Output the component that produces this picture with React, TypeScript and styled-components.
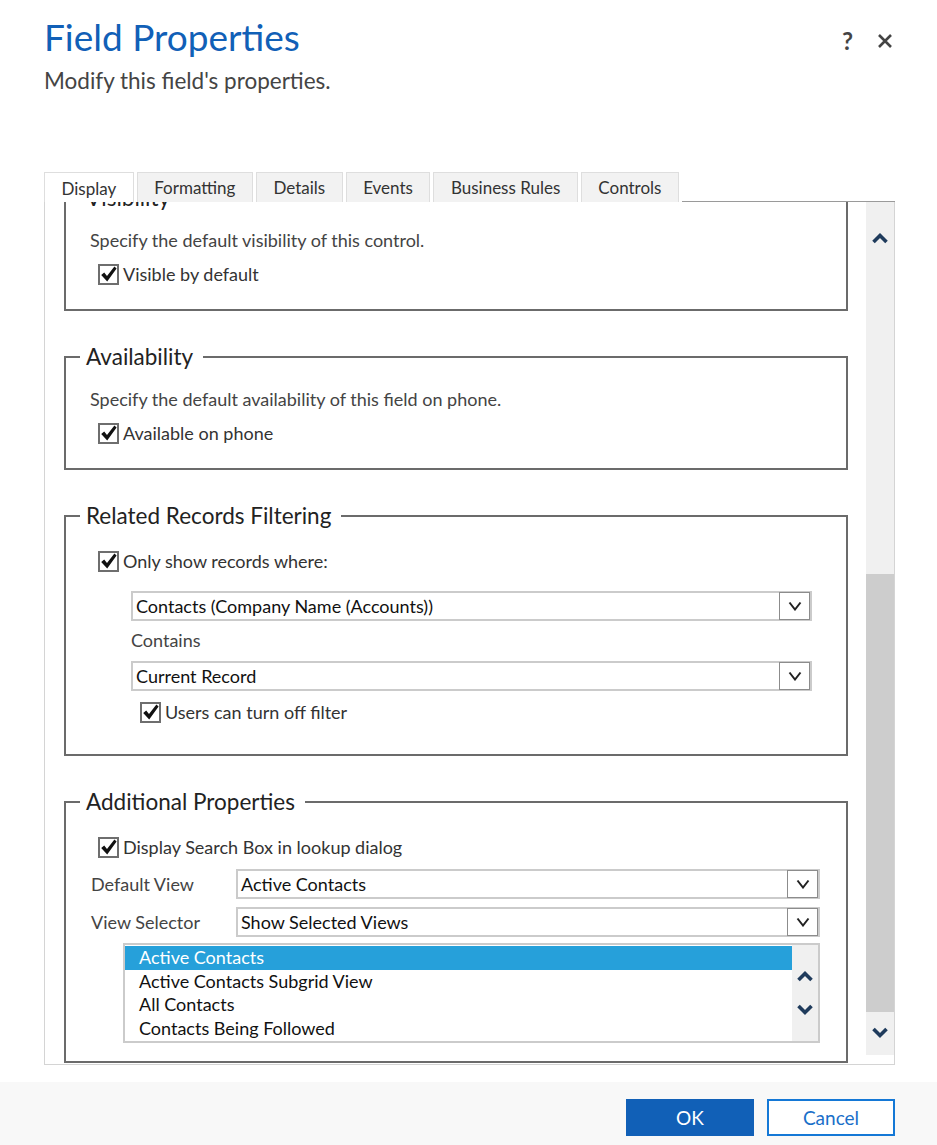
import React from 'react'
import styled, { createGlobalStyle } from 'styled-components'

const GlobalStyle = createGlobalStyle`
  html, body {
    margin: 0;
    padding: 0;
    background: #fff;
  }
  body {
    font-family: Lato, "Open Sans", sans-serif;
    color: #333;
  }
  * {
    box-sizing: border-box;
  }
`

const Page = styled.div`
  width: 937px;
  height: 1145px;
  display: flex;
  flex-direction: column;
  overflow: hidden;
`

const Header = styled.div`
  height: 172px;
  display: flex;
  justify-content: space-between;
  align-items: flex-start;
  padding: 15px 44px 0 44px;
`

const Title = styled.h1`
  margin: 0;
  font-size: 37px;
  line-height: 44px;
  font-weight: 400;
  color: #1160b7;
`

const Subtitle = styled.div`
  margin-top: 8px;
  font-size: 22.5px;
  line-height: 28px;
  color: #444;
`

const HeaderTools = styled.div`
  display: flex;
  align-items: center;
  gap: 24px;
  margin-top: 13px;
`

const HelpMark = styled.span`
  font-size: 24px;
  font-weight: 700;
  color: #444;
  line-height: 26px;
`

const Body = styled.div`
  padding: 0 42px 0 44px;
  display: flex;
  flex-direction: column;
`

const TabRow = styled.div`
  display: flex;
  align-items: flex-end;
  height: 30px;
  gap: 3px;
`

const Tab = styled.div<{ $active?: boolean }>`
  height: ${({ $active }) => ($active ? '31px' : '30px')};
  margin-bottom: ${({ $active }) => ($active ? '-1px' : '0')};
  padding: 0 16.5px;
  display: flex;
  align-items: center;
  font-size: 17px;
  color: #333;
  background: ${({ $active }) => ($active ? '#fff' : '#f2f2f2')};
  border: 1px solid #dedede;
  border-bottom: none;
`

const TabFiller = styled.div`
  flex: 1;
  align-self: stretch;
  border-bottom: 1px solid #9a9a9a;
`

const Frame = styled.div`
  height: 863px;
  display: flex;
  border: 1px solid #d4d4d4;
  border-top: none;
`

const Viewport = styled.div`
  flex: 1;
  overflow: hidden;
  display: flex;
  flex-direction: column;
  justify-content: flex-end;
  gap: 32px;
  padding: 0 18px 1px 19px;
`

const Group = styled.fieldset<{ $pb: number }>`
  margin: 0;
  min-width: 0;
  padding: 0 0 ${({ $pb }) => $pb}px 0;
  border: 2px solid #6b6b6b;
  display: flex;
  flex-direction: column;
  flex-shrink: 0;
`

const Legend = styled.legend`
  margin-left: 14px;
  padding: 0 10px 0 6px;
  font-size: 22.5px;
  line-height: 28px;
  color: #222;
`

const Description = styled.div<{ $mt: number }>`
  margin-top: ${({ $mt }) => $mt}px;
  padding-left: 24px;
  font-size: 18px;
  line-height: 22px;
  color: #444;
`

const CheckRow = styled.label<{ $indent: number; $mt: number }>`
  display: flex;
  align-items: center;
  gap: 4px;
  height: 24px;
  margin-top: ${({ $mt }) => $mt}px;
  margin-left: ${({ $indent }) => $indent}px;
  font-size: 18px;
  color: #333;
`

const SubLabel = styled.div`
  margin: 8px 0 0 65px;
  font-size: 18px;
  line-height: 22px;
  color: #444;
`

const SelectBox = styled.div<{ $mt?: number; $ml?: number; $mr?: number }>`
  height: 30px;
  margin-top: ${({ $mt }) => $mt ?? 0}px;
  margin-left: ${({ $ml }) => $ml ?? 0}px;
  margin-right: ${({ $mr }) => $mr ?? 0}px;
  display: flex;
  align-items: center;
  border: 2px solid #cbcbcb;
  background: #fff;
`

const SelectValue = styled.div`
  flex: 1;
  padding-left: 3px;
  font-size: 18px;
  color: #111;
  white-space: nowrap;
`

const SelectButton = styled.div`
  width: 31px;
  height: 28px;
  display: flex;
  align-items: center;
  justify-content: center;
  border: 1px solid #8c8c8c;
  background: #fff;
`

const FormRow = styled.div<{ $mt: number }>`
  display: grid;
  grid-template-columns: 145px 1fr;
  align-items: center;
  margin: ${({ $mt }) => $mt}px 26px 0 25px;
`

const FormLabel = styled.div`
  font-size: 18px;
  color: #444;
`

const ListBox = styled.div`
  height: 100px;
  margin: 6px 26px 0 57px;
  border: 2px solid #cbcbcb;
  display: flex;
`

const ListItems = styled.div`
  flex: 1;
  padding-top: 1px;
`

const ListItem = styled.div<{ $selected?: boolean }>`
  height: 23.5px;
  line-height: 23.5px;
  padding-left: 14px;
  font-size: 18px;
  color: ${({ $selected }) => ($selected ? '#fff' : '#111')};
  background: ${({ $selected }) => ($selected ? '#26a0da' : 'transparent')};
`

const ListScroll = styled.div`
  width: 26px;
  background: #f0f0f0;
  display: flex;
  flex-direction: column;
  align-items: center;
  justify-content: center;
  gap: 22px;
`

const Scrollbar = styled.div`
  width: 28px;
  margin-bottom: 9px;
  background: #f0f0f0;
  display: flex;
  flex-direction: column;
`

const ArrowCell = styled.div<{ $h: number; $align: string }>`
  height: ${({ $h }) => $h}px;
  display: flex;
  justify-content: center;
  align-items: ${({ $align }) => $align};
`

const Track = styled.div`
  flex: 1;
  display: flex;
  flex-direction: column;
  justify-content: flex-end;
`

const Thumb = styled.div`
  height: 438px;
  background: #cdcdcd;
`

const Footer = styled.div`
  margin-top: 17px;
  height: 63px;
  background: #f8f8f8;
  display: flex;
  justify-content: flex-end;
  align-items: flex-start;
  gap: 13px;
  padding: 17px 42px 0 0;
`

const FooterButton = styled.button<{ $primary?: boolean }>`
  width: 128px;
  height: 37px;
  font-family: inherit;
  font-size: 19px;
  color: ${({ $primary }) => ($primary ? '#fff' : '#1a6fc9')};
  background: ${({ $primary }) => ($primary ? '#1160b7' : '#fff')};
  border: 2px solid ${({ $primary }) => ($primary ? '#1160b7' : '#1478d6')};
  cursor: pointer;
`

const Chevron = ({ up, color = '#1f3b5c' }: { up?: boolean; color?: string }) => (
  <svg width="18" height="12" viewBox="0 0 18 12">
    <path
      d={up ? 'M2.5 10 L9 3.5 L15.5 10' : 'M2.5 2 L9 8.5 L15.5 2'}
      stroke={color}
      strokeWidth="3.6"
      fill="none"
      strokeLinecap="butt"
    />
  </svg>
)

const DropChevron = () => (
  <svg width="14" height="10" viewBox="0 0 14 10">
    <path d="M1.5 1.5 L7 8.5 L12.5 1.5" stroke="#222" strokeWidth="2" fill="none" />
  </svg>
)

const CloseIcon = () => (
  <svg width="16" height="16" viewBox="0 0 16 16">
    <path d="M2 2 L14 14 M14 2 L2 14" stroke="#444" strokeWidth="2.6" />
  </svg>
)

const CheckMark = () => (
  <svg width="21" height="21" viewBox="0 0 21 21">
    <rect x="1" y="1" width="19" height="19" fill="#fff" stroke="#6e6e6e" strokeWidth="2" />
    <path d="M3.2 11 L6.2 8.4 L9 12 L16.4 2.6 L18.6 4.6 L9.2 17.4 Z" fill="#111" />
  </svg>
)

const Check = ({ label, indent = 32, mt = 0 }: { label: string; indent?: number; mt?: number }) => (
  <CheckRow $indent={indent} $mt={mt}>
    <CheckMark />
    {label}
  </CheckRow>
)

const Select = ({ value, mt, ml, mr }: { value: string; mt?: number; ml?: number; mr?: number }) => (
  <SelectBox $mt={mt} $ml={ml} $mr={mr}>
    <SelectValue>{value}</SelectValue>
    <SelectButton>
      <DropChevron />
    </SelectButton>
  </SelectBox>
)

const tabs = ['Display', 'Formatting', 'Details', 'Events', 'Business Rules', 'Controls']

const views = ['Active Contacts', 'Active Contacts Subgrid View', 'All Contacts', 'Contacts Being Followed']

const App = () => {
  return (
    <Page>
      <GlobalStyle />
      <Header>
        <div>
          <Title>Field Properties</Title>
          <Subtitle>Modify this field's properties.</Subtitle>
        </div>
        <HeaderTools>
          <HelpMark>?</HelpMark>
          <CloseIcon />
        </HeaderTools>
      </Header>

      <Body>
        <TabRow>
          {tabs.map((t, i) => (
            <Tab key={t} $active={i === 0}>
              {t}
            </Tab>
          ))}
          <TabFiller />
        </TabRow>

        <Frame>
          <Viewport>
            <Group $pb={23}>
              <Legend>Visibility</Legend>
              <Description $mt={17}>Specify the default visibility of this control.</Description>
              <Check label="Visible by default" mt={11} />
            </Group>

            <Group $pb={23}>
              <Legend>Availability</Legend>
              <Description $mt={17}>Specify the default availability of this field on phone.</Description>
              <Check label="Available on phone" mt={11} />
            </Group>

            <Group $pb={30}>
              <Legend>Related Records Filtering</Legend>
              <Check label="Only show records where:" mt={19} />
              <Select value="Contacts (Company Name (Accounts))" mt={18} ml={65} mr={34} />
              <SubLabel>Contains</SubLabel>
              <Select value="Current Record" mt={10} ml={65} mr={34} />
              <Check label="Users can turn off filter" indent={74} mt={9} />
            </Group>

            <Group $pb={18}>
              <Legend>Additional Properties</Legend>
              <Check label="Display Search Box in lookup dialog" mt={19} />
              <FormRow $mt={10}>
                <FormLabel>Default View</FormLabel>
                <Select value="Active Contacts" />
              </FormRow>
              <FormRow $mt={8}>
                <FormLabel>View Selector</FormLabel>
                <Select value="Show Selected Views" />
              </FormRow>
              <ListBox>
                <ListItems>
                  {views.map((v, i) => (
                    <ListItem key={v} $selected={i === 0}>
                      {v}
                    </ListItem>
                  ))}
                </ListItems>
                <ListScroll>
                  <Chevron up />
                  <Chevron />
                </ListScroll>
              </ListBox>
            </Group>
          </Viewport>

          <Scrollbar>
            <ArrowCell $h={72} $align="center">
              <Chevron up />
            </ArrowCell>
            <Track>
              <Thumb />
            </Track>
            <ArrowCell $h={43} $align="flex-start">
              <div style={{ paddingTop: 11 }}>
                <Chevron />
              </div>
            </ArrowCell>
          </Scrollbar>
        </Frame>
      </Body>

      <Footer>
        <FooterButton $primary>OK</FooterButton>
        <FooterButton>Cancel</FooterButton>
      </Footer>
    </Page>
  )
}

export default App
